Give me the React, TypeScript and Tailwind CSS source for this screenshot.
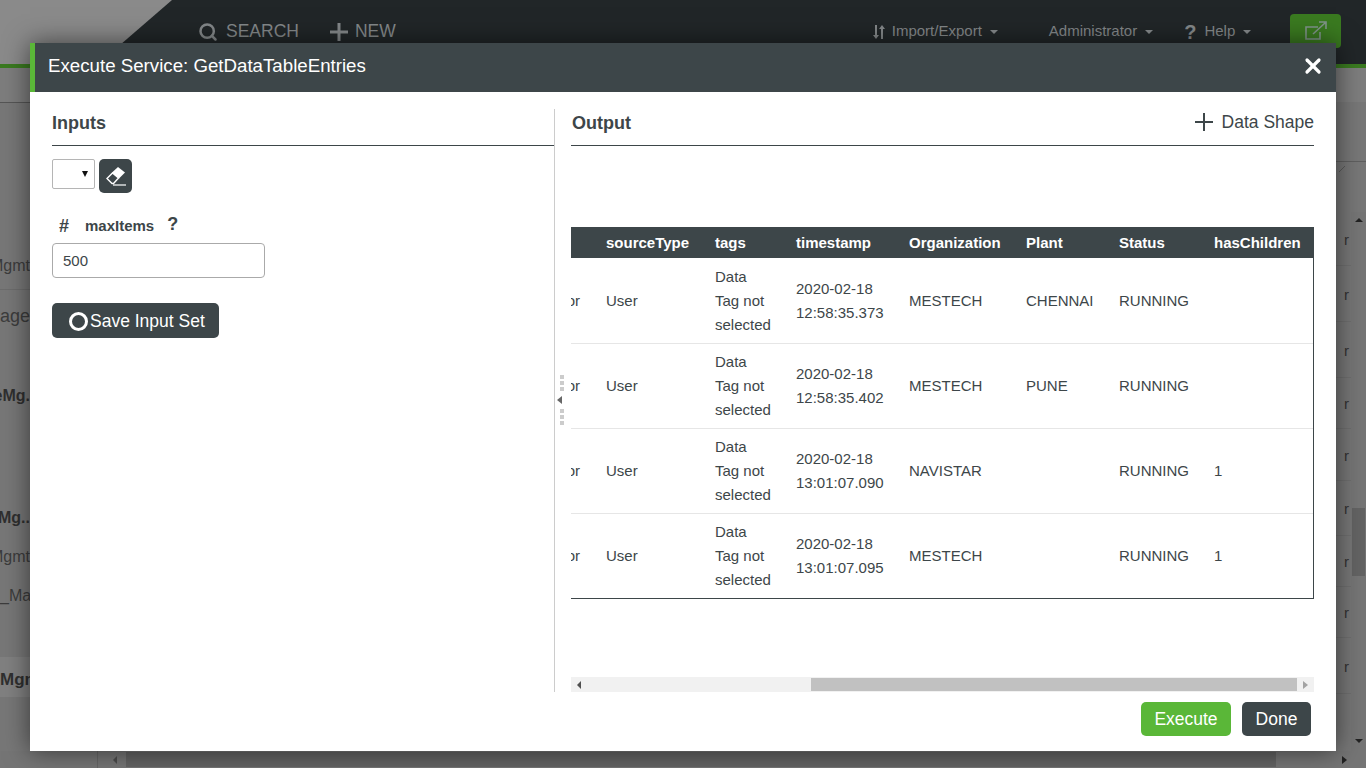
import { Search, X } from "lucide-react";

type Row = { tagsTime: string[]; org: string; plant: string; status: string; children: string; height: string };

const rows: Row[] = [
  { tagsTime: ["2020-02-18", "12:58:35.373"], org: "MESTECH", plant: "CHENNAI", status: "RUNNING", children: "", height: "h-[86px]" },
  { tagsTime: ["2020-02-18", "12:58:35.402"], org: "MESTECH", plant: "PUNE", status: "RUNNING", children: "", height: "h-[85px]" },
  { tagsTime: ["2020-02-18", "13:01:07.090"], org: "NAVISTAR", plant: "", status: "RUNNING", children: "1", height: "h-[85px]" },
  { tagsTime: ["2020-02-18", "13:01:07.095"], org: "MESTECH", plant: "", status: "RUNNING", children: "1", height: "h-[84px]" },
];

const gridCols = "grid grid-cols-[25px_109px_81px_113px_117px_93px_95px_110px]";

function Caret() {
  return <span className="ml-[8px] w-0 h-0 border-x-[4px] border-x-transparent border-t-[4px] border-t-[#85898b]" />;
}

function PlusIcon({ color, weight }: { color: string; weight: number }) {
  return (
    <svg className="w-[18px] h-[18px] shrink-0" viewBox="0 0 18 18" stroke={color} strokeWidth={weight}>
      <path d="M9 0v18M0 9h18" />
    </svg>
  );
}

function TopBar() {
  return (
    <div className="h-[68px] shrink-0 flex bg-[#212628] border-b-[4px] border-[#3a7a20] text-[#84888a]">
      <div className="w-[172px] h-full bg-[#8a8a8a] [clip-path:polygon(0_0,100%_0,57%_100%,0_100%)]" />
      <div className="flex-1 flex items-center pb-[1px]">
        <Search className="ml-[26px] w-[20px] h-[20px]" strokeWidth={3} />
        <span className="ml-[8px] text-[17.5px]">SEARCH</span>
        <span className="ml-[31px]"><PlusIcon color="#84888a" weight={3} /></span>
        <span className="ml-[7px] text-[17.5px]">NEW</span>
        <svg className="ml-[477px] w-[12px] h-[16px]" viewBox="0 0 12 16" fill="#84888a">
          <path d="M2 1h2v10h2l-3 4-3-4h2zM8 15h2V5h2L9 1 6 5h2z" />
        </svg>
        <span className="ml-[7px] text-[15px]">Import/Export</span>
        <Caret />
        <span className="ml-[51px] text-[15px]">Administrator</span>
        <Caret />
        <span className="ml-[31px] text-[20px] font-bold leading-none">?</span>
        <span className="ml-[8px] text-[15px]">Help</span>
        <Caret />
        <div className="ml-[39px] -mt-[1px] w-[51px] h-[34px] rounded-[4px] bg-[#3a7a20] flex items-center justify-center">
          <svg className="w-[24px] h-[20px]" viewBox="0 0 24 20" fill="none" stroke="#80948a" strokeWidth="1.6">
            <path d="M14 6H2v12h14V11" />
            <path d="M9 13 21 2M15 1h7v7" />
          </svg>
        </div>
      </div>
    </div>
  );
}

function LeftEdge() {
  return (
    <div className="w-[30px] flex flex-col text-[16px] text-[#2f2f2f] whitespace-nowrap border-t border-[#555]">
      <div className="h-[142px]" />
      <div className="h-[45px] pb-[3px] flex items-center justify-end border-b border-[#6c6c6c] text-[#3c3c3c]">Mgmt</div>
      <div className="h-[50px] pt-[2px] flex items-center justify-end text-[#3c3c3c] text-[18px]">Manage</div>
      <div className="h-[110px] pt-[2px] flex items-center justify-end font-bold">TimeMg.</div>
      <div className="h-[47px]" />
      <div className="h-[40px] pt-[2px] flex items-center justify-end font-bold">Mg..</div>
      <div className="h-[38px] pt-[2px] flex items-center justify-end text-[#3c3c3c]">Mgmt</div>
      <div className="h-[39px] pt-[3px] flex items-center justify-start text-[#3c3c3c] overflow-hidden">_Mas</div>
      <div className="h-[43px]" />
      <div className="h-[40px] pt-[6px] flex items-center justify-start bg-[#808080] font-bold text-[17px]">Mgm</div>
    </div>
  );
}

function RightEdge() {
  const heights = ["h-[54px]", "h-[56px]", "h-[56px]", "h-[51px]", "h-[52px]", "h-[55px]", "h-[51px]", "h-[51px]", "h-[56px]"];
  return (
    <div className="w-[30px] flex flex-col">
      <div className="h-[60px] border-b border-[#5f5f5f]" />
      <div className="h-[50px] pl-[2px] pt-[3px]">
        <svg className="w-[8px] h-[8px]" viewBox="0 0 8 8" stroke="#5a5a5a" fill="none">
          <path d="M1 7 7 1" />
        </svg>
      </div>
      <div className="flex-1 flex">
        <div className="w-[15px] flex flex-col text-[15px] text-[#333]">
          {heights.map((h, i) => (
            <div key={i} className={`${h} pl-[8px] pt-[3px] flex items-center border-b border-[#6f6f6f]`}>r</div>
          ))}
        </div>
        <div className="w-[15px] bg-[#757575] flex flex-col items-center">
          <div className="mt-[6px] w-0 h-0 border-x-[4px] border-x-transparent border-b-[4px] border-b-[#222]" />
          <div className="mt-[286px] w-[13px] h-[68px] bg-[#636363]" />
          <div className="mt-[163px] w-0 h-0 border-x-[4px] border-x-transparent border-t-[4px] border-t-[#222]" />
        </div>
      </div>
    </div>
  );
}

function BottomBar() {
  return (
    <div className="h-[17px] shrink-0 flex items-center bg-[#757575]">
      <div className="w-[98px] h-full border-r border-[#666]" />
      <div className="ml-[15px] w-0 h-0 border-y-[4px] border-y-transparent border-r-[4px] border-r-[#4c4c4c]" />
      <div className="ml-[9px] w-[1150px] h-[15px] bg-[#636363]" />
      <div className="ml-[66px] w-0 h-0 border-y-[4px] border-y-transparent border-l-[5px] border-l-[#222]" />
    </div>
  );
}

function InputsPanel() {
  return (
    <div className="w-[525px] shrink-0 pl-[22px] border-r border-[#cccccc] text-[#3d4649]">
      <div className="h-[37px] border-b border-[#3d4649] text-[18px] font-bold leading-[29px]">Inputs</div>
      <div className="mt-[13px] flex gap-[4px] items-start">
        <div className="w-[43px] h-[30px] border border-[#b5b5b5] rounded-[2px] flex items-center justify-end pr-[6px]">
          <span className="w-0 h-0 border-x-[3.5px] border-x-transparent border-t-[6px] border-t-[#111]" />
        </div>
        <button className="w-[33px] h-[34px] rounded-[5px] bg-[#3d4649] flex items-center justify-center">
          <svg className="w-[22px] h-[22px]" viewBox="0 0 22 22" fill="none">
            <path d="M2 13.5 7.5 8l6 5-5 5.5H7z" stroke="#fff" strokeWidth="1.4" />
            <path d="M7 7.5 13 2l7 5.5-6 6z" fill="#fff" />
            <path d="M8 20h13" stroke="#fff" strokeWidth="1.2" />
          </svg>
        </button>
      </div>
      <div className="mt-[23px] h-[20px] flex items-center text-[15px] font-bold">
        <span className="ml-[7px] w-[26px] text-[18px]">#</span>
        <span>maxItems</span>
        <span className="ml-[13px] text-[18px] -translate-y-[2px]">?</span>
      </div>
      <input
        readOnly
        value="500"
        className="mt-[7px] block w-[213px] h-[35px] px-[10px] border border-[#aaaaaa] rounded-[4px] text-[15px] text-[#3d4649] outline-none"
      />
      <button className="mt-[25px] h-[35px] w-[167px] rounded-[5px] bg-[#3d4649] flex items-center pl-[17px] pt-[1px] text-[17.5px] text-white">
        <span className="w-[19px] h-[19px] rounded-full border-[3px] border-white mr-[2px]" />
        Save Input Set
      </button>
    </div>
  );
}

function OutputTable() {
  const head = ["sourceType", "tags", "timestamp", "Organization", "Plant", "Status", "hasChildren"];
  return (
    <div className="mt-[81px] w-[743px] text-[15px] leading-[24px]">
      <div className={`${gridCols} h-[31px] bg-[#3d4649] text-white font-bold items-center`}>
        <div />
        {head.map((h) => (
          <div key={h} className="pl-[10px]">{h}</div>
        ))}
      </div>
      <div className="border-r border-b border-[#3d4649]">
        {rows.map((r, i) => (
          <div key={i} className={`${gridCols} ${r.height} items-center ${i < rows.length - 1 ? "border-b border-[#e6e6e6]" : ""}`}>
            <div className="overflow-hidden flex justify-end pr-[16px] whitespace-nowrap w-[25px]">Sensor</div>
            <div className="pl-[10px]">User</div>
            <div className="pl-[10px]">Data<br />Tag not<br />selected</div>
            <div className="pl-[10px]">{r.tagsTime[0]}<br />{r.tagsTime[1]}</div>
            <div className="pl-[10px]">{r.org}</div>
            <div className="pl-[10px]">{r.plant}</div>
            <div className="pl-[10px]">{r.status}</div>
            <div className="pl-[10px]">{r.children}</div>
          </div>
        ))}
      </div>
    </div>
  );
}

function OutputPanel() {
  return (
    <div className="relative flex-1 pl-[16px] text-[#3d4649]">
      <div className="w-[743px] h-[37px] flex justify-between border-b border-[#3d4649]">
        <span className="ml-[1px] text-[18px] font-bold leading-[29px]">Output</span>
        <span className="flex items-start text-[17.5px] leading-[26px]">
          <span className="mt-[4px] mr-[9px]"><PlusIcon color="#3d4649" weight={2} /></span>
          Data Shape
        </span>
      </div>
      <OutputTable />
      <div className="mt-[78px] w-[743px] h-[15px] bg-[#f1f1f1] flex items-center">
        <div className="ml-[6px] w-0 h-0 border-y-[4px] border-y-transparent border-r-[4px] border-r-[#505050]" />
        <div className="ml-[230px] w-[486px] h-[13px] bg-[#c1c1c1]" />
        <div className="ml-[6px] w-0 h-0 border-y-[4px] border-y-transparent border-l-[5px] border-l-[#a3a3a3]" />
      </div>
      {/* splitter handle, sits over the table edge */}
      <div className="absolute left-[5px] top-[266px] flex flex-col items-center gap-[2px]">
        {[0, 1, 2].map((i) => (
          <span key={i} className="w-[4px] h-[4px] bg-[#cccccc]" />
        ))}
        <span className="my-[3px] -ml-[5px] w-0 h-0 border-y-[4px] border-y-transparent border-r-[5px] border-r-[#666]" />
        {[0, 1, 2].map((i) => (
          <span key={i} className="w-[4px] h-[4px] bg-[#cccccc]" />
        ))}
      </div>
    </div>
  );
}

function Modal() {
  return (
    <div className="absolute left-[30px] top-[43px] w-[1306px] h-[708px] bg-white flex flex-col shadow-[0_0_24px_rgba(0,0,0,0.55)]">
      <div className="h-[49px] shrink-0 flex items-center justify-between bg-[#3d4649] border-l-[5px] border-[#5ab738] pl-[13px] pr-[11px] pb-[3px] text-white">
        <span className="text-[18.7px]">Execute Service: GetDataTableEntries</span>
        <X className="w-[24px] h-[24px]" strokeWidth={3.2} />
      </div>
      <div className="mt-[17px] h-[583px] flex">
        <InputsPanel />
        <OutputPanel />
      </div>
      <div className="mt-[10px] flex justify-end gap-[11px] pr-[25px] text-[17.5px] text-white">
        <button className="w-[90px] h-[34px] rounded-[5px] bg-[#5ab738]">Execute</button>
        <button className="w-[69px] h-[34px] rounded-[5px] bg-[#3d4649]">Done</button>
      </div>
    </div>
  );
}

export default function App() {
  return (
    <div className="relative w-[1366px] h-[768px] overflow-hidden flex flex-col bg-[#777777] font-['Liberation_Sans',Arial,sans-serif]">
      <TopBar />
      <div className="h-[34px] shrink-0 bg-[#7d7d7d]" />
      <div className="flex-1 flex justify-between min-h-0">
        <LeftEdge />
        <RightEdge />
      </div>
      <BottomBar />
      <Modal />
    </div>
  );
}
